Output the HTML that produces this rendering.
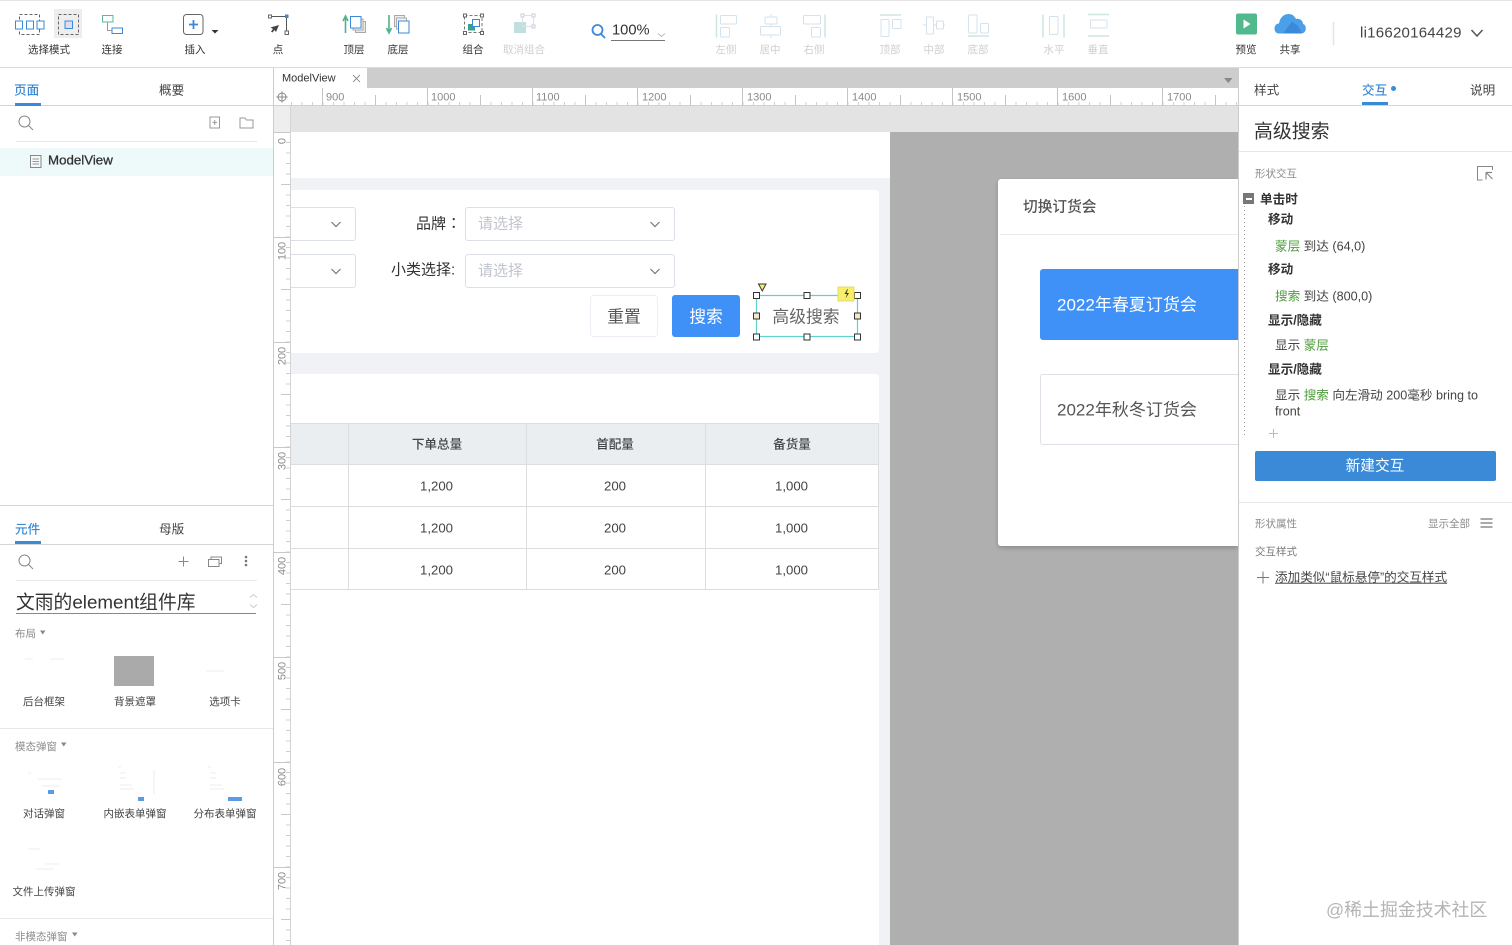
<!DOCTYPE html>
<html lang="zh"><head><meta charset="utf-8"><title>ModelView</title>
<style>
*{box-sizing:border-box}
html,body{margin:0;padding:0;width:1512px;height:945px;overflow:hidden;background:#fff}
body{position:relative;font-family:"Liberation Sans","Noto Sans CJK SC",sans-serif;color:#333}
.b{position:absolute}
.t{position:absolute;white-space:nowrap;line-height:1;transform:translateY(-50%);margin-top:1px}
.c{position:absolute;white-space:nowrap;line-height:1;transform:translate(-50%,-50%);margin-top:1px}
.tl{font-size:10.5px;color:#333}
.dis{color:#cfcfcf}
.tab{font-size:12.6px;color:#444}
.blue{color:#3b8ad9;font-weight:500}
.sec{font-size:10.5px;color:#8c8c8c}
.lb{font-size:10.5px;color:#444}
.act{font-size:12.6px;color:#333;font-weight:700}
.d{font-size:12.6px;color:#444}
.g{color:#4f9d3c}
.rl{font-size:11px;color:#8a8a8a}
.sel{position:absolute;background:#fff;border:1px solid #dcdfe6;border-radius:3px}
.ph{font-size:15px;color:#c0c4cc}
.fl{font-size:15px;color:#333}
.th{font-size:12.6px;color:#444;font-weight:500}
.td{font-size:13.2px;color:#444}
.line{position:absolute;background:#ddd}
svg{position:absolute;left:0;top:0;overflow:visible}
</style></head><body>

<div class="b" style="left:0;top:0;width:1512px;height:1px;background:#e4e4e4"></div>
<div class="b" style="left:0;top:67px;width:1512px;height:1px;background:#dcdcdc"></div>

<!-- canvas -->
<div class="b" style="left:274px;top:68px;width:964px;height:20px;background:#cdcdcd"></div>
<div class="b" style="left:274px;top:68px;width:93px;height:20px;background:#fff"></div>
<div class="t" style="left:282px;top:78px;font-size:11px;color:#333">ModelView</div>
<div class="b" style="left:274px;top:88px;width:964px;height:18px;background:#fff"></div>
<div class="b" style="left:291px;top:102px;width:947px;height:3px;background:repeating-linear-gradient(90deg,#d0d0d0 0 1px,transparent 1px 10.5px)"></div>
<div class="b" style="left:274px;top:105px;width:964px;height:1px;background:#d0d0d0"></div>
<div class="b" style="left:322px;top:88px;width:916px;height:18px;background:repeating-linear-gradient(90deg,#c4c4c4 0 1px,transparent 1px 105px)"></div>
<div class="b" style="left:375px;top:95px;width:863px;height:10px;background:repeating-linear-gradient(90deg,#c4c4c4 0 1px,transparent 1px 105px)"></div>
<div class="t rl" style="left:326px;top:97px">900</div>
<div class="t rl" style="left:431px;top:97px">1000</div>
<div class="t rl" style="left:536px;top:97px">1100</div>
<div class="t rl" style="left:642px;top:97px">1200</div>
<div class="t rl" style="left:747px;top:97px">1300</div>
<div class="t rl" style="left:852px;top:97px">1400</div>
<div class="t rl" style="left:957px;top:97px">1500</div>
<div class="t rl" style="left:1062px;top:97px">1600</div>
<div class="t rl" style="left:1167px;top:97px">1700</div>

<div class="b" style="left:274px;top:106px;width:17px;height:26px;background:#eee"></div>
<div class="b" style="left:291px;top:106px;width:947px;height:26px;background:#e3e3e3"></div>
<!-- v ruler -->
<div class="b" style="left:274px;top:132px;width:17px;height:813px;background:#fff"></div>
<div class="b" style="left:286px;top:142px;width:4px;height:803px;background:repeating-linear-gradient(180deg,#cfcfcf 0 1px,transparent 1px 10.5px)"></div>
<div class="b" style="left:274px;top:132px;width:16px;height:813px;background:repeating-linear-gradient(180deg,#c8c8c8 0 1px,transparent 1px 105px)"></div>
<div class="b" style="left:281px;top:184px;width:9px;height:761px;background:repeating-linear-gradient(180deg,#c8c8c8 0 1px,transparent 1px 105px)"></div>
<div class="b" style="left:290px;top:106px;width:1px;height:839px;background:#d4d4d4"></div>
<div class="c rl" style="left:283px;top:140px;transform:translate(-50%,-50%) rotate(-90deg)">0</div>
<div class="c rl" style="left:283px;top:250px;transform:translate(-50%,-50%) rotate(-90deg)">100</div>
<div class="c rl" style="left:283px;top:355px;transform:translate(-50%,-50%) rotate(-90deg)">200</div>
<div class="c rl" style="left:283px;top:460px;transform:translate(-50%,-50%) rotate(-90deg)">300</div>
<div class="c rl" style="left:283px;top:565px;transform:translate(-50%,-50%) rotate(-90deg)">400</div>
<div class="c rl" style="left:283px;top:670px;transform:translate(-50%,-50%) rotate(-90deg)">500</div>
<div class="c rl" style="left:283px;top:776px;transform:translate(-50%,-50%) rotate(-90deg)">600</div>
<div class="c rl" style="left:283px;top:880px;transform:translate(-50%,-50%) rotate(-90deg)">700</div>

<!-- page -->
<div class="b" style="left:291px;top:132px;width:599px;height:813px;background:#f0f2f5"></div>
<div class="b" style="left:291px;top:132px;width:599px;height:46px;background:#fff"></div>
<div class="b" style="left:291px;top:190px;width:588px;height:163px;background:#fff;border-radius:0 4px 4px 0"></div>
<div class="b" style="left:291px;top:374px;width:588px;height:571px;background:#fff;border-radius:0 4px 0 0"></div>

<div class="sel" style="left:291px;top:207px;width:65px;height:34px;border-left:0;border-radius:0 3px 3px 0"></div>
<div class="sel" style="left:291px;top:254px;width:65px;height:34px;border-left:0;border-radius:0 3px 3px 0"></div>
<div class="t fl" style="left:416px;top:223px">品牌</div><div class="t fl" style="left:450px;top:222px">：</div>
<div class="t fl" style="left:391px;top:269px">小类选择:</div>
<div class="sel" style="left:465px;top:207px;width:210px;height:34px"></div>
<div class="sel" style="left:465px;top:254px;width:210px;height:34px"></div>
<div class="t ph" style="left:478px;top:223px">请选择</div>
<div class="t ph" style="left:478px;top:270px">请选择</div>

<div class="b" style="left:590px;top:295px;width:68px;height:42px;border:1px solid #ebeef5;border-radius:3px;background:#fff"></div>
<div class="c" style="left:624px;top:317px;font-size:16.8px;color:#555">重置</div>
<div class="b" style="left:672px;top:295px;width:68px;height:42px;border-radius:3px;background:#3f90f7"></div>
<div class="c" style="left:706px;top:317px;font-size:16.8px;color:#fff">搜索</div>
<div class="c" style="left:806px;top:317px;font-size:16.8px;color:#666">高级搜索</div>

<!-- table -->
<div class="b" style="left:291px;top:423px;width:588px;height:42px;background:#ebeef1"></div>
<div class="line" style="left:291px;top:423px;width:588px;height:1px"></div>
<div class="line" style="left:291px;top:464px;width:588px;height:1px"></div>
<div class="line" style="left:291px;top:506px;width:588px;height:1px"></div>
<div class="line" style="left:291px;top:548px;width:588px;height:1px"></div>
<div class="line" style="left:291px;top:589px;width:588px;height:1px"></div>
<div class="line" style="left:348px;top:423px;width:1px;height:167px"></div>
<div class="line" style="left:526px;top:423px;width:1px;height:167px"></div>
<div class="line" style="left:705px;top:423px;width:1px;height:167px"></div>
<div class="line" style="left:878px;top:423px;width:1px;height:167px"></div>
<div class="c th" style="left:437px;top:444px">下单总量</div>
<div class="c th" style="left:615px;top:444px">首配量</div>
<div class="c th" style="left:792px;top:444px">备货量</div>
<div class="c td" style="left:436.500px;top:485px">1,200</div><div class="c td" style="left:615px;top:485px">200</div><div class="c td" style="left:791.500px;top:485px">1,000</div>
<div class="c td" style="left:436.500px;top:527px">1,200</div><div class="c td" style="left:615px;top:527px">200</div><div class="c td" style="left:791.500px;top:527px">1,000</div>
<div class="c td" style="left:436.500px;top:569px">1,200</div><div class="c td" style="left:615px;top:569px">200</div><div class="c td" style="left:791.500px;top:569px">1,000</div>

<!-- mask + dialog -->
<div class="b" style="left:890px;top:132px;width:348px;height:813px;background:#afafaf"></div>
<div class="b" style="left:998px;top:179px;width:240px;height:367px;background:#fff;border-radius:3px 0 0 3px;box-shadow:0 2px 4px rgba(0,0,0,.2)"></div>
<div class="b" style="left:1000px;top:234px;width:238px;height:1px;background:#ebebeb"></div>
<div class="t" style="left:1023px;top:207px;font-size:14.7px;color:#555;font-weight:500">切换订货会</div>
<div class="b" style="left:1040px;top:269px;width:198px;height:71px;background:#3f90f7;border-radius:3px 0 0 3px"></div>
<div class="t" style="left:1057px;top:304px;font-size:17px;color:#fff">2022年春夏订货会</div>
<div class="b" style="left:1040px;top:374px;width:198px;height:71px;background:#fff;border:1px solid #dcdfe6;border-right:0;border-radius:3px 0 0 3px"></div>
<div class="t" style="left:1057px;top:409px;font-size:17px;color:#555">2022年秋冬订货会</div>

<!-- left panel -->
<div class="b" style="left:0;top:68px;width:273px;height:877px;background:#fff"></div>
<div class="b" style="left:273px;top:68px;width:1px;height:877px;background:#ccc"></div>
<div class="t tab blue" style="left:14px;top:90px">页面</div>
<div class="t tab" style="left:159px;top:90px">概要</div>
<div class="b" style="left:0;top:105px;width:273px;height:1px;background:#d4d4d4"></div>
<div class="b" style="left:15px;top:103px;width:26px;height:3px;background:#3b8ad9"></div>
<div class="b" style="left:16px;top:141px;width:241px;height:1px;background:#e6e6e6"></div>
<div class="b" style="left:0;top:148px;width:273px;height:28px;background:#eefafa"></div>
<div class="t" style="left:48px;top:159px;font-size:13.3px;color:#333;font-weight:500;-webkit-text-stroke:.3px #333">ModelView</div>
<div class="b" style="left:0;top:505px;width:273px;height:1px;background:#d4d4d4"></div>
<div class="t tab blue" style="left:15px;top:529px">元件</div>
<div class="t tab" style="left:159px;top:529px">母版</div>
<div class="b" style="left:0;top:544px;width:273px;height:1px;background:#d4d4d4"></div>
<div class="b" style="left:15px;top:541px;width:26px;height:3px;background:#3b8ad9"></div>
<div class="b" style="left:16px;top:580px;width:241px;height:1px;background:#e8e8e8"></div>
<div class="t" style="left:16px;top:601.500px;font-size:18.8px;color:#333">文雨的element组件库</div>
<div class="b" style="left:16px;top:613px;width:240px;height:1px;background:#888"></div>
<div class="t sec" style="left:15px;top:633px">布局</div>
<div class="t sec" style="left:15px;top:745.500px">模态弹窗</div>
<div class="t sec" style="left:15px;top:935.500px">非模态弹窗</div>
<div class="b" style="left:114px;top:656px;width:40px;height:30px;background:#aaa"></div>
<div class="c lb" style="left:44px;top:700.500px">后台框架</div>
<div class="c lb" style="left:135px;top:700.500px">背景遮罩</div>
<div class="c lb" style="left:225px;top:700.500px">选项卡</div>
<div class="b" style="left:0;top:728px;width:273px;height:1px;background:#e8e8e8"></div>
<div class="c lb" style="left:44px;top:813px">对话弹窗</div>
<div class="c lb" style="left:135px;top:813px">内嵌表单弹窗</div>
<div class="c lb" style="left:225px;top:813px">分布表单弹窗</div>
<div class="c lb" style="left:44px;top:890.500px">文件上传弹窗</div>
<div class="b" style="left:0;top:918px;width:273px;height:1px;background:#e8e8e8"></div>

<!-- right panel -->
<div class="b" style="left:1238px;top:68px;width:274px;height:877px;background:#fff;border-left:1px solid #ccc"></div>
<div class="t tab" style="left:1254px;top:90px">样式</div>
<div class="t tab blue" style="left:1362px;top:90px">交互</div>
<div class="t tab" style="left:1470px;top:90px">说明</div>
<div class="b" style="left:1239px;top:105px;width:273px;height:1px;background:#d4d4d4"></div>
<div class="b" style="left:1362px;top:102px;width:26px;height:3px;background:#3b8ad9"></div>
<div class="b" style="left:1391px;top:86px;width:5px;height:5px;border-radius:50%;background:#3b8ad9"></div>
<div class="t" style="left:1254px;top:132px;font-size:18.9px;color:#333">高级搜索</div>
<div class="b" style="left:1239px;top:151px;width:273px;height:1px;background:#e6e6e6"></div>
<div class="t sec" style="left:1255px;top:173px">形状交互</div>
<div class="b" style="left:1243px;top:193px;width:11px;height:11px;background:#777"></div>
<div class="b" style="left:1245.5px;top:198px;width:6px;height:1.5px;background:#fff"></div>
<div class="t act" style="left:1260px;top:199px">单击时</div>
<div class="t act" style="left:1268px;top:219px">移动</div>
<div class="t d" style="left:1275px;top:246px"><span class="g">蒙层</span> 到达 (64,0)</div>
<div class="t act" style="left:1268px;top:269px">移动</div>
<div class="t d" style="left:1275px;top:296px"><span class="g">搜索</span> 到达 (800,0)</div>
<div class="t act" style="left:1268px;top:320px">显示/隐藏</div>
<div class="t d" style="left:1275px;top:345px">显示 <span class="g">蒙层</span></div>
<div class="t act" style="left:1268px;top:369px">显示/隐藏</div>
<div class="t d" style="left:1275px;top:395px">显示 <span class="g">搜索</span> 向左滑动 200毫秒 bring to</div>
<div class="t d" style="left:1275px;top:411px">front</div>
<div class="b" style="left:1255px;top:451px;width:241px;height:30px;background:#3a8ad8;border-radius:2px"></div>
<div class="c" style="left:1375px;top:466px;font-size:14.7px;color:#fff">新建交互</div>
<div class="b" style="left:1239px;top:502px;width:273px;height:1px;background:#e6e6e6"></div>
<div class="t sec" style="left:1255px;top:523px">形状属性</div>
<div class="t sec" style="left:1428px;top:523px">显示全部</div>
<div class="t sec" style="left:1255px;top:551px;color:#777">交互样式</div>
<div class="t d" style="left:1275px;top:577px;text-decoration:underline">添加类似“鼠标悬停”的交互样式</div>
<div class="t" style="left:1326px;top:910px;font-size:17.9px;color:#b4b4b4">@稀土掘金技术社区</div>

<!-- toolbar labels -->
<div class="c tl" style="left:49px;top:49px">选择模式</div>
<div class="c tl" style="left:112px;top:49px">连接</div>
<div class="c tl" style="left:195px;top:49px">插入</div>
<div class="c tl" style="left:278px;top:49px">点</div>
<div class="c tl" style="left:354px;top:49px">顶层</div>
<div class="c tl" style="left:398px;top:49px">底层</div>
<div class="c tl" style="left:473px;top:49px">组合</div>
<div class="c tl dis" style="left:524px;top:49px">取消组合</div>
<div class="c tl dis" style="left:726px;top:49px">左侧</div>
<div class="c tl dis" style="left:770px;top:49px">居中</div>
<div class="c tl dis" style="left:814px;top:49px">右侧</div>
<div class="c tl dis" style="left:890px;top:49px">顶部</div>
<div class="c tl dis" style="left:934px;top:49px">中部</div>
<div class="c tl dis" style="left:978px;top:49px">底部</div>
<div class="c tl dis" style="left:1054px;top:49px">水平</div>
<div class="c tl dis" style="left:1098px;top:49px">垂直</div>
<div class="c tl" style="left:1246px;top:49px">预览</div>
<div class="c tl" style="left:1290px;top:49px">共享</div>
<div class="t" style="left:612px;top:30px;font-size:14.7px;color:#333">100%</div>
<div class="t" style="left:1360px;top:32px;font-size:15px;color:#444;letter-spacing:.25px">li16620164429</div>

<!-- icons -->
<svg width="1512" height="945" viewBox="0 0 1512 945" fill="none">
<!-- select mode -->
<rect x="19.500" y="14.500" width="20" height="20" stroke="#666" stroke-dasharray="3 2"/>
<g stroke="#3b8ad9" fill="#fff"><rect x="15.500" y="21" width="7" height="8"/><rect x="26.500" y="21" width="7" height="8"/><rect x="37" y="21" width="7" height="8"/></g>
<rect x="54" y="9" width="28" height="29" fill="#eee"/>
<rect x="58.500" y="14.500" width="20" height="20" stroke="#666" stroke-dasharray="3 2"/>
<rect x="65" y="21" width="7.500" height="7.500" stroke="#3b8ad9" fill="#dde"/>
<!-- connect -->
<rect x="102.500" y="15.500" width="10.500" height="6.500" stroke="#5cb89a" fill="#fff"/>
<rect x="112" y="28" width="10.500" height="5.500" stroke="#3b8ad9" fill="#fff"/>
<path d="M107.500 22v8.500H112" stroke="#999"/>
<!-- insert -->
<rect x="183.500" y="14.500" width="19.500" height="20" rx="3" stroke="#666"/>
<path d="M193.500 20v9M189 24.500h9" stroke="#3b8ad9" stroke-width="1.800"/>
<path d="M211.500 30h7l-3.500 3.500z" fill="#333"/>
<!-- point -->
<path d="M271 16.500h15M286.500 17v15" stroke="#555"/>
<rect x="268.500" y="15" width="3" height="3" stroke="#666" fill="#fff"/>
<rect x="285" y="14.500" width="3.500" height="3.500" fill="#3b8ad9"/>
<rect x="285" y="31" width="3.500" height="3.500" stroke="#666" fill="#fff"/>
<path d="M279 25l-8.500 2.500 2.500 1.500-2 2.500 1.500 1 2-2.500 1.500 2z" fill="#444"/>
<!-- top -->
<path d="M343 21l2.500-5 2.500 5M345.500 18v15" stroke="#4db38a" stroke-width="1.600"/>
<rect x="355.500" y="21.500" width="10" height="11" fill="#e8e8e8" stroke="#aaa"/>
<rect x="353" y="19" width="10" height="11" fill="#f0f0f0" stroke="#aaa"/>
<rect x="350.500" y="16.500" width="10.500" height="11.500" fill="#fff" stroke="#3b8ad9"/>
<!-- bottom -->
<path d="M386.500 28l2.500 5 2.500-5M389 15v16" stroke="#4db38a" stroke-width="1.600"/>
<rect x="394.500" y="15.500" width="10" height="11" fill="#eee" stroke="#aaa"/>
<rect x="396.500" y="18" width="10" height="11" fill="#f4f4f4" stroke="#aaa"/>
<rect x="398.500" y="21" width="10.500" height="12" fill="#fff" stroke="#3b8ad9"/>
<!-- group -->
<rect x="464.500" y="15.500" width="17.500" height="17" stroke="#777" stroke-dasharray="3 2"/>
<g fill="#fff" stroke="#666"><rect x="463.500" y="14" width="3" height="3"/><rect x="480.500" y="14" width="3" height="3"/><rect x="463.500" y="31.500" width="3" height="3"/><rect x="480.500" y="31.500" width="3" height="3"/></g>
<rect x="468" y="24" width="7" height="6.500" fill="#3aa08f"/>
<rect x="472.500" y="19.500" width="7" height="7" fill="#fff" stroke="#3b8ad9"/>
<!-- ungroup -->
<rect x="514" y="22" width="12" height="11" fill="#bfe0de"/>
<path d="M522.500 15.500h11v11h-11z" stroke="#d5e4ea"/>
<g fill="#fff" stroke="#ccd"><rect x="521" y="14" width="3" height="3"/><rect x="532" y="14" width="3" height="3"/><rect x="532" y="25" width="3" height="3"/></g>
<!-- zoom -->
<circle cx="597.500" cy="30" r="5" stroke="#3b8ad9" stroke-width="1.800"/>
<path d="M601 34l4 4" stroke="#3b8ad9" stroke-width="1.800"/>
<path d="M611 40.500h54" stroke="#777"/>
<path d="M658 33.500l3.500 3 3.500-3" stroke="#bbb"/>
<!-- align -->
<g stroke="#d3e2ec" fill="#fff">
<path d="M716.500 14.500v23" stroke="#cfe6df" stroke-width="1.500"/><rect x="720.500" y="15.500" width="16" height="8.500" rx="1"/><rect x="720.500" y="27.500" width="9" height="9.500" rx="1"/>
<path d="M771 14v24" /><rect x="765" y="17" width="12" height="7" rx="1"/><rect x="760.500" y="26.500" width="20" height="8.500" rx="1"/>
<path d="M825 14.500v23" stroke="#cfe6df" stroke-width="1.500"/><rect x="803.500" y="15.500" width="17" height="8.500" rx="1"/><rect x="811.500" y="27.500" width="9" height="9.500" rx="1"/>
<path d="M880 15h21" stroke="#cfe6df" stroke-width="1.500"/><rect x="881" y="19.500" width="8" height="17" rx="1"/><rect x="892.500" y="19.500" width="8.500" height="9" rx="1"/>
<path d="M923 25h22"/><rect x="926.500" y="17" width="7" height="17" rx="1"/><rect x="936.500" y="21" width="7" height="8" rx="1"/>
<path d="M968 36h21" stroke="#cfe6df" stroke-width="1.500"/><rect x="968.500" y="15" width="8.500" height="18" rx="1"/><rect x="980.500" y="23.500" width="8" height="9.500" rx="1"/>
<path d="M1043 14.500v23M1064 14.500v23" stroke="#cfe6df" stroke-width="1.500"/><rect x="1049.500" y="16.500" width="8.500" height="18" rx="1"/>
<path d="M1088 14.500h21M1088 36h21" stroke="#cfe6df" stroke-width="1.500"/><rect x="1090.500" y="20" width="16.500" height="8" rx="1"/>
</g>
<!-- preview -->
<rect x="1236" y="13.500" width="21" height="21" rx="2" fill="#52b98f"/>
<path d="M1243.500 19.500l7 4.500-7 4.500z" fill="#fff"/>
<!-- cloud -->
<path d="M1279 33.500c-3 0-4.500-2.500-4.500-5 0-3 2-5 4.500-5 .8-5 4-9.500 9.500-9.500 3.800 0 6 2 7.500 5 4-1 7 2 7 5 2 .6 2.800 2.500 2.800 4.500 0 3-2 5-4.800 5z" fill="#4a9fe8"/>
<path d="M1283 33.500l9-12 6 4.500 4 7.500z" fill="#3b8ad9"/>
<path d="M1333.500 22v23" stroke="#e4e4e4" stroke-width="1.500"/>
<path d="M1471.500 30l5.500 6 5.500-6" stroke="#555" stroke-width="1.500"/>
<!-- tab strip -->
<path d="M353 75l7 7M360 75l-7 7" stroke="#777" stroke-width=".8"/>
<path d="M1224 78h8.500l-4.250 5z" fill="#888"/>
<circle cx="282" cy="97" r="4" stroke="#888"/><path d="M276.500 97h11M282 91.500v11" stroke="#888"/>
<!-- page search row -->
<circle cx="24.500" cy="121.500" r="5.500" stroke="#888"/><path d="M28.500 125.500l4.500 4.500" stroke="#888"/>
<rect x="210" y="117" width="9.500" height="11" stroke="#999"/><path d="M212.500 122.500h4.500M214.750 120v5" stroke="#999"/>
<path d="M240 118h5l1.500 2h6.500v8h-13z" stroke="#999"/>
<path d="M30.500 155.500h10.500v12h-10.500z" stroke="#888" fill="#f4f8f8"/><path d="M32.500 159h6.500M32.500 161.500h6.500M32.500 164h6.500" stroke="#999"/>
<!-- comp search row -->
<circle cx="24.500" cy="560.500" r="5.500" stroke="#888"/><path d="M28.500 564.500l4.500 4.500" stroke="#888"/>
<path d="M178.500 561.500h10M183.500 556.500v10" stroke="#888"/>
<path d="M208.500 559.500h10.500v7h-10.500zM211 559.500v-2.500h10.500v6.500H219" stroke="#888"/>
<circle cx="246" cy="557" r="1.300" fill="#777"/><circle cx="246" cy="561" r="1.300" fill="#777"/><circle cx="246" cy="565" r="1.300" fill="#777"/>
<path d="M250 597.500l3.500-3 3.500 3M250 604.500l3.500 3 3.500-3" stroke="#ccc"/>
<path d="M40 630.500h5.500l-2.750 4zM61 742.500h5.500l-2.750 4zM72 932.500h5.500l-2.750 4z" fill="#888"/>
<!-- thumbnails -->
<g stroke="#e6e6e6" stroke-width=".7">
<path d="M25 659h8M50 659h14M206 671h18"/>
<path d="M28 773h3M38 779h24M42 786h18M118 767h3M120 773h6M120 778h6M120 785h12M120 789h14M154 770v24M208 767h3M210 773h6M210 778h6M210 785h12M210 789h14M28 849h12M45 864h14M36 869h18"/>
</g>
<rect x="48" y="790" width="6" height="4" fill="#5a9ae8"/><rect x="138" y="797" width="6" height="4" fill="#5a9ae8"/><rect x="228" y="797" width="14" height="4" fill="#5a9ae8"/>
<!-- select chevrons -->
<g stroke="#777" stroke-width="1.200">
<path d="M331.500 222l4.500 4.500 4.500-4.500M331.500 269l4.500 4.500 4.500-4.500M650.500 222l4.500 4.500 4.500-4.500M650.500 269l4.500 4.500 4.500-4.500"/>
</g>
<!-- selection -->
<rect x="756.500" y="295.500" width="101" height="41" stroke="#5fd3cb" stroke-width="1.200"/>
<g fill="#fff" stroke="#333"><rect x="753.500" y="292.500" width="6" height="6"/><rect x="804" y="292.500" width="6" height="6"/><rect x="854.500" y="292.500" width="6" height="6"/><rect x="753.500" y="334" width="6" height="6"/><rect x="804" y="334" width="6" height="6"/><rect x="854.500" y="334" width="6" height="6"/></g>
<g fill="#f6e8c6" stroke="#333"><rect x="753.500" y="313" width="6" height="6"/><rect x="854.500" y="313" width="6" height="6"/></g>
<path d="M758.500 284h7.500l-3.750 7z" fill="#f6f06a" stroke="#333"/>
<rect x="838" y="287" width="16" height="14" fill="#f7ee6a" stroke="#e6da70"/>
<path d="M847.500 289l-3 5h2.500l-1.500 4.500 3.500-5.500h-2.500l1.500-4z" fill="#333"/>
<!-- right panel -->
<path d="M1244.500 206v232" stroke="#999" stroke-dasharray="1 3"/>
<path d="M1492.500 170v-3.500h-15v13.500h5" stroke="#888"/><path d="M1486 172.500h6M1486 172.500v7M1486.500 173l6 6" stroke="#888" stroke-width="1.200"/>
<path d="M1269 433.500h9M1273.500 429v9" stroke="#bbb"/>
<path d="M1480.500 519h12M1480.500 523h12M1480.500 527h12" stroke="#777" stroke-width="1.300"/>
<path d="M1257 577.500h12M1263 571.500v12" stroke="#777"/>
</svg>
</body></html>
